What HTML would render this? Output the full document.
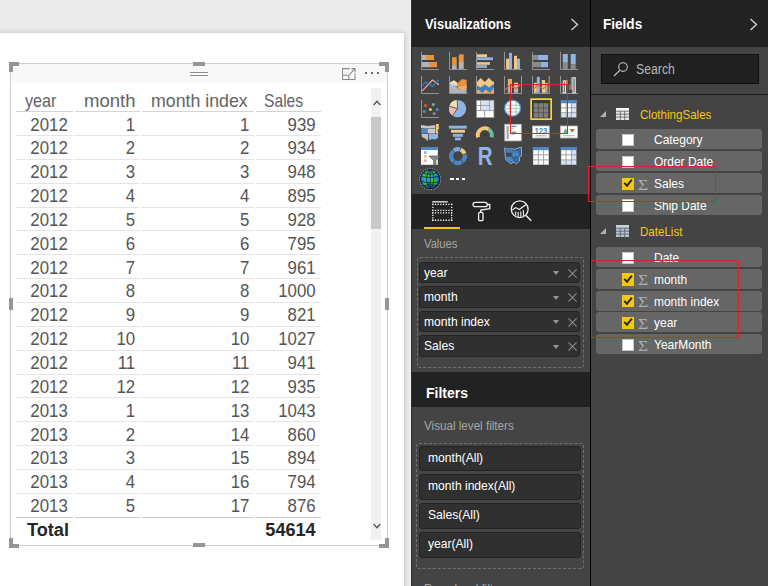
<!DOCTYPE html>
<html lang="en"><head><meta charset="utf-8"><title>Power BI</title>
<style>
html,body{margin:0;padding:0}
body{width:768px;height:586px;overflow:hidden;position:relative;background:#eaeaea;font-family:"Liberation Sans",sans-serif;}
div,span,svg,i,b,u,em{position:absolute;box-sizing:border-box}
#topbar{left:0;top:0;width:411px;height:33px;background:#eaeaea}
#canvas{left:-10px;top:33px;width:414px;height:563px;background:#fff;box-shadow:0 0 5px rgba(0,0,0,.2)}
#gutter{left:410px;top:0;width:1px;height:586px;background:#f2f2f2}
#visual{left:10px;top:63px;width:377.5px;height:483px;border:1px solid #cecece;background:#fff}
#vhead{left:0;top:0;width:376px;height:19px;background:#f8f8f8}
.grip{left:179px;width:18px;height:1px;background:#8c8c8c}
#focus{left:329.6px;top:2.6px}
#more{left:354px;top:8px;width:16px;height:3px}
#more i{position:absolute;top:0;width:2.4px;height:2.4px;background:#707070}
#more i:nth-child(1){left:0}#more i:nth-child(2){left:6px}#more i:nth-child(3){left:12px}
.hd{width:10px;height:10px;border:0 solid #959595}
.hd.h1{left:9px;top:62px;border-top-width:4px;border-left-width:4px}
.hd.h2{left:378.6px;top:62px;border-top-width:4px;border-right-width:4px}
.hd.h3{left:9px;top:538px;border-bottom-width:4px;border-left-width:4px}
.hd.h4{left:378.6px;top:538px;border-bottom-width:4px;border-right-width:4px}
.hm{background:#959595}
#tbl{left:0;top:0;width:330px;height:546px;color:#555}
.th{top:90px;height:22px;line-height:22px;font-size:18.2px;white-space:nowrap;color:#646464;transform-origin:0 0}
.hl{top:111px;height:1px;background:#d4d4d4}
.tr{left:16px;width:305px;height:24px;border-bottom:1px solid #e4e4e4;font-size:18.2px}
.tr span{top:1.5px;height:22px;line-height:22px;text-align:right;white-space:nowrap;transform:scaleX(.925);transform-origin:100% 0}
.c1{left:0;width:51.8px}.c2{left:58px;width:61.2px}.c3{left:125px;width:108.4px}.c4{left:239px;width:60.7px}
.tot{border-bottom:0;border-top:0;font-weight:bold;font-size:17.5px;color:#252525}
.tot span{top:2px;transform:scaleX(1.035)}
.tot .t1{left:10.5px;text-align:left;transform-origin:0 0}
#sb{left:371px;top:88px;width:10px;height:452.3px;background:#f1f1f1}
#sbt{left:.3px;top:29.3px;width:9.3px;height:111.4px;background:#c9c9c9}
.au{left:1.6px;top:12px}.ad{left:1.6px;top:435px}
#viz{left:411px;top:0;width:180px;height:586px;background:#444;border-left:1px solid #2b2b2b}
#fields{left:591px;top:0;width:177px;height:586px;background:#444}
#pdiv{left:590px;top:0;width:1px;height:586px;background:#000}
.ph{left:0;width:100%;background:#222}
.pt{color:#fff;font-weight:bold;font-size:14.5px;line-height:20px;white-space:nowrap;transform:scaleX(.89);transform-origin:0 0}
.sec{color:#a6a6a6;font-size:12.3px;line-height:16px;white-space:nowrap;transform:scaleX(.93);transform-origin:0 0}
#tabsel{left:12px;top:227px;width:36px;height:2px;background:#f2c811}
.dash{border:1px dashed #707070;border-radius:3px}
.vi{left:7.3px;width:161.2px;height:21.8px;background:#303030;border:1px solid #242424;border-radius:3px}
.vi span{left:4px;top:2px;transform:scaleX(.93);transform-origin:0 0;color:#fff;font-size:13px;line-height:16px;white-space:nowrap}
.vi b{left:133px;top:8.5px;width:0;height:0;border:3.8px solid transparent;border-top:4px solid #969696;border-bottom:0}
.vi u{left:148px;top:6px;width:9px;height:9px}
.vi u svg{left:0;top:0}
.fi{left:7.2px;width:161.8px;height:25.8px;background:#303030;border:1px solid #242424;border-radius:3px}
.fi span{left:8.3px;top:3px;transform:scaleX(.96);transform-origin:0 0;color:#fff;font-size:12.6px;line-height:16px;white-space:nowrap}
#search{left:10px;top:54px;width:158px;height:30px;background:#212121;border:1px solid #0e0e0e}
#search span{left:34.4px;top:6px;transform:scaleX(.875);transform-origin:0 0;color:#b4b4b4;font-size:14px;line-height:16px}
#fline{left:0;top:94px;width:177px;height:1px;background:#1c1c1c}
.grp{left:0;width:177px;height:18px}
.grp .tri{position:absolute;left:9.2px;top:5.6px;width:0;height:0;border-left:6.6px solid transparent;border-bottom:6.6px solid #b0b0b0}
.grp .tbi{left:25px;top:3px}
.grp span{left:49.2px;top:1.7px;transform:scaleX(.89);transform-origin:0 0;color:#f2c811;font-size:13px;line-height:16px;white-space:nowrap}
.fr{left:4.8px;width:166.2px;height:20px;background:#666;border-radius:3px}
.fr .cb{position:absolute;left:26.2px;top:4.5px;width:12.2px;height:12.2px;background:#fff;border:1.6px solid #c6c6c6}
.fr .cb.on{background:#f2c811;border-color:#f2c811}
.fr .cb svg{left:-1.1px;top:-1.6px}
.fr em{position:absolute;left:42.3px;top:4.6px;transform:scaleX(1.25);transform-origin:0 0;font-style:normal;color:#b0b0b0;font-size:14px;line-height:16px;font-family:"Liberation Serif",serif}
.fr span{left:58.2px;top:3px;transform:scaleX(.935);transform-origin:0 0;color:#fff;font-size:12.8px;line-height:16px;white-space:nowrap}
.red{border:1px solid #e0202a}
#ico{left:0;top:0;width:768px;height:586px}
#ico svg{overflow:visible}
.dots{width:16px;height:3px}
.dots i{top:0;width:3.5px;height:2.6px;background:#f4f4f4}
.dots i:nth-child(1){left:0}.dots i:nth-child(2){left:5.8px}.dots i:nth-child(3){left:11.7px}
.gap{top:111px;width:1.5px;height:409px;background:#fff}
.tr.last{border-bottom:1.6px solid #cbcbcb}

</style></head>
<body>
<div id="topbar"></div>
<div id="canvas"></div>
<div id="gutter"></div>
<div id="visual">
<div id="vhead"></div>
<div class="grip" style="top:8px"></div><div class="grip" style="top:11px"></div>
<svg id="focus" width="15.6" height="14.2" viewBox="0 0 15 13" preserveAspectRatio="none"><path d="M8.5 1.5H1.5V11.5H13.5V6" fill="none" stroke="#8a8a8a" stroke-width="1"/><path d="M1.5 7.5H7.5V11.5" fill="none" stroke="#8a8a8a" stroke-width="1"/><path d="M8 7L13.5 1.5M10 1.5H13.5V5" fill="none" stroke="#8a8a8a" stroke-width="1"/></svg>
<div id="more"><i></i><i></i><i></i></div>
</div>
<div class="hd h1"></div><div class="hd h2"></div><div class="hd h3"></div><div class="hd h4"></div>
<div class="hm" style="left:193px;top:62px;width:12px;height:4px"></div>
<div class="hm" style="left:193px;top:543px;width:12px;height:4px"></div>
<div class="hm" style="left:9px;top:298px;width:4px;height:12px"></div>
<div class="hm" style="left:385px;top:298px;width:4px;height:12px"></div>
<div id="tbl">
<div class="th" style="left:25.2px;transform:scaleX(.89)">year</div><div class="th" style="left:83.6px;transform:scaleX(1.02)">month</div><div class="th" style="left:151.1px;transform:scaleX(.975)">month index</div><div class="th" style="left:264.4px;transform:scaleX(.86)">Sales</div>
<div class="hl" style="left:16px;width:57px"></div><div class="hl" style="left:74px;width:66px"></div><div class="hl" style="left:141.5px;width:112.5px"></div><div class="hl" style="left:255px;width:66px"></div>
<div class="tr" style="top:112.00px"><span class="c1">2012</span><span class="c2">1</span><span class="c3">1</span><span class="c4">939</span></div>
<div class="tr" style="top:135.85px"><span class="c1">2012</span><span class="c2">2</span><span class="c3">2</span><span class="c4">934</span></div>
<div class="tr" style="top:159.70px"><span class="c1">2012</span><span class="c2">3</span><span class="c3">3</span><span class="c4">948</span></div>
<div class="tr" style="top:183.55px"><span class="c1">2012</span><span class="c2">4</span><span class="c3">4</span><span class="c4">895</span></div>
<div class="tr" style="top:207.40px"><span class="c1">2012</span><span class="c2">5</span><span class="c3">5</span><span class="c4">928</span></div>
<div class="tr" style="top:231.25px"><span class="c1">2012</span><span class="c2">6</span><span class="c3">6</span><span class="c4">795</span></div>
<div class="tr" style="top:255.10px"><span class="c1">2012</span><span class="c2">7</span><span class="c3">7</span><span class="c4">961</span></div>
<div class="tr" style="top:278.95px"><span class="c1">2012</span><span class="c2">8</span><span class="c3">8</span><span class="c4">1000</span></div>
<div class="tr" style="top:302.80px"><span class="c1">2012</span><span class="c2">9</span><span class="c3">9</span><span class="c4">821</span></div>
<div class="tr" style="top:326.65px"><span class="c1">2012</span><span class="c2">10</span><span class="c3">10</span><span class="c4">1027</span></div>
<div class="tr" style="top:350.50px"><span class="c1">2012</span><span class="c2">11</span><span class="c3">11</span><span class="c4">941</span></div>
<div class="tr" style="top:374.35px"><span class="c1">2012</span><span class="c2">12</span><span class="c3">12</span><span class="c4">935</span></div>
<div class="tr" style="top:398.20px"><span class="c1">2013</span><span class="c2">1</span><span class="c3">13</span><span class="c4">1043</span></div>
<div class="tr" style="top:422.05px"><span class="c1">2013</span><span class="c2">2</span><span class="c3">14</span><span class="c4">860</span></div>
<div class="tr" style="top:445.90px"><span class="c1">2013</span><span class="c2">3</span><span class="c3">15</span><span class="c4">894</span></div>
<div class="tr" style="top:469.75px"><span class="c1">2013</span><span class="c2">4</span><span class="c3">16</span><span class="c4">794</span></div>
<div class="tr last" style="top:493.60px"><span class="c1">2013</span><span class="c2">5</span><span class="c3">17</span><span class="c4">876</span></div>
<div class="tr tot" style="top:517.45px"><span class="t1">Total</span><span class="c4">54614</span></div>
<div class="gap" style="left:73px"></div><div class="gap" style="left:140px"></div><div class="gap" style="left:254px"></div></div>
<div id="sb"><div id="sbt"></div><svg class="au" width="8" height="6" viewBox="0 0 8 6"><path d="M0.7 5L4 1.2L7.3 5" fill="none" stroke="#555" stroke-width="1.3"/></svg><svg class="ad" width="8" height="6" viewBox="0 0 8 6"><path d="M0.7 1L4 4.8L7.3 1" fill="none" stroke="#555" stroke-width="1.3"/></svg></div>
<div id="viz">
<div class="ph" style="top:0;height:47px"></div>
<div class="pt" style="left:12.8px;top:14px">Visualizations</div>
<svg class="chev" style="left:158px;top:18px" width="9" height="13" viewBox="0 0 9 13"><path d="M1.5 1L7.5 6.5L1.5 12" fill="none" stroke="#d0d0d0" stroke-width="1.4"/></svg>
<div class="ph" style="top:194px;height:35px"></div>
<div id="tabsel"></div>
<div class="sec" style="left:11.8px;top:236px;transform:scaleX(.91)">Values</div>
<div class="dash" style="left:4.8px;top:257.2px;width:167.4px;height:110.6px"></div>
<div class="vi" style="top:261.5px"><span>year</span><b></b><u><svg width="9" height="9" viewBox="0 0 9 9"><path d="M0.4 0.4L8.6 8.6M8.6 0.4L0.4 8.6" stroke="#8c8c8c" stroke-width="1.05" fill="none"/></svg></u></div>
<div class="vi" style="top:286.1px"><span>month</span><b></b><u><svg width="9" height="9" viewBox="0 0 9 9"><path d="M0.4 0.4L8.6 8.6M8.6 0.4L0.4 8.6" stroke="#8c8c8c" stroke-width="1.05" fill="none"/></svg></u></div>
<div class="vi" style="top:310.7px"><span>month index</span><b></b><u><svg width="9" height="9" viewBox="0 0 9 9"><path d="M0.4 0.4L8.6 8.6M8.6 0.4L0.4 8.6" stroke="#8c8c8c" stroke-width="1.05" fill="none"/></svg></u></div>
<div class="vi" style="top:335.2px"><span>Sales</span><b></b><u><svg width="9" height="9" viewBox="0 0 9 9"><path d="M0.4 0.4L8.6 8.6M8.6 0.4L0.4 8.6" stroke="#8c8c8c" stroke-width="1.05" fill="none"/></svg></u></div>
<div class="ph" style="top:372px;height:35px"></div>
<div class="pt" style="left:13.6px;top:382.5px;transform:scaleX(.965)">Filters</div>
<div class="sec" style="left:12px;top:418px;transform:scaleX(.947)">Visual level filters</div>
<div class="dash" style="left:3.9px;top:443px;width:168.2px;height:126px"></div>
<div class="fi" style="top:445.6px"><span>month(All)</span></div>
<div class="fi" style="top:474.4px"><span>month index(All)</span></div>
<div class="fi" style="top:503.1px"><span>Sales(All)</span></div>
<div class="fi" style="top:531.9px"><span>year(All)</span></div>
<div class="sec" style="left:12px;top:580.5px;transform:scaleX(.947)">Page level filters</div>
</div>
<div id="fields">
<div class="ph" style="top:0;height:47px"></div>
<div class="pt" style="left:12.2px;top:14px;transform:scaleX(.935)">Fields</div>
<svg class="chev" style="left:158px;top:18px" width="9" height="13" viewBox="0 0 9 13"><path d="M1.5 1L7.5 6.5L1.5 12" fill="none" stroke="#d0d0d0" stroke-width="1.4"/></svg>
<div id="search"><svg width="16" height="16" viewBox="0 0 16 16" style="left:11px;top:6px"><circle cx="10" cy="6" r="4.3" fill="none" stroke="#b8b8b8" stroke-width="1.15"/><path d="M6.8 9.2L1 15" stroke="#b8b8b8" stroke-width="1.25"/></svg><span>Search</span></div>
<div id="fline"></div>
<div class="grp" style="top:105px"><i class="tri"></i><svg class="tbi" width="13" height="12" viewBox="0 0 13 12"><rect x="0" y="0" width="13" height="12" fill="#e6e6e6"/><rect x="0" y="0" width="13" height="2.8" fill="#f6f6f6"/><path d="M0 3.2H13M0 6.2H13M0 9.1H13M4.3 3.2V12M8.7 3.2V12" stroke="#5a5a5a" stroke-width=".8"/></svg><span>ClothingSales</span></div>
<div class="fr" style="top:129.2px"><i class="cb"></i><span>Category</span></div>
<div class="fr" style="top:151.1px"><i class="cb"></i><span>Order Date</span></div>
<div class="fr" style="top:173px"><i class="cb on"><svg width="12" height="12" viewBox="0 0 12 12"><path d="M2.2 5.8L5 8.7L9.9 2.7" fill="none" stroke="#262626" stroke-width="1.9"/></svg></i><em>Σ</em><span>Sales</span></div>
<div class="fr" style="top:194.9px"><i class="cb"></i><span>Ship Date</span></div>
<div class="grp" style="top:222.2px"><i class="tri"></i><svg class="tbi" width="13" height="12" viewBox="0 0 13 12"><rect x="0" y="0" width="13" height="12" fill="#b4c2d6"/><rect x="0" y="0" width="13" height="2.8" fill="#c6d2e2"/><path d="M0 3.2H13M0 6.2H13M0 9.1H13M4.3 3.2V12M8.7 3.2V12" stroke="#5a5a5a" stroke-width=".8"/></svg><span>DateList</span></div>
<div class="fr" style="top:247px"><i class="cb"></i><span>Date</span></div>
<div class="fr" style="top:268.9px"><i class="cb on"><svg width="12" height="12" viewBox="0 0 12 12"><path d="M2.2 5.8L5 8.7L9.9 2.7" fill="none" stroke="#262626" stroke-width="1.9"/></svg></i><em>Σ</em><span>month</span></div>
<div class="fr" style="top:290.6px"><i class="cb on"><svg width="12" height="12" viewBox="0 0 12 12"><path d="M2.2 5.8L5 8.7L9.9 2.7" fill="none" stroke="#262626" stroke-width="1.9"/></svg></i><em>Σ</em><span>month index</span></div>
<div class="fr" style="top:312.3px"><i class="cb on"><svg width="12" height="12" viewBox="0 0 12 12"><path d="M2.2 5.8L5 8.7L9.9 2.7" fill="none" stroke="#262626" stroke-width="1.9"/></svg></i><em>Σ</em><span>year</span></div>
<div class="fr" style="top:334.1px"><i class="cb"></i><em>Σ</em><span>YearMonth</span></div>
</div>
<div id="pdiv"></div>
<div id="ico">
<svg style="left:421.1px;top:51.9px" width="18" height="18" viewBox="0 0 18 18"><path d="M0.5 0V17.5H18" fill="none" stroke="#929292" stroke-width="1"/><rect x="1" y="3" width="4" height="5" fill="#b4b4b4"/><rect x="5" y="3" width="8" height="5" fill="#e8923c"/><rect x="1" y="10" width="7" height="5.2" fill="#b4b4b4"/><rect x="8" y="10" width="8" height="5.2" fill="#e8923c"/></svg>
<svg style="left:448.8px;top:51.9px" width="18" height="18" viewBox="0 0 18 18"><path d="M0.5 0V17.5H18" fill="none" stroke="#929292" stroke-width="1"/><rect x="3" y="5.2" width="4.7" height="8" fill="#e8923c"/><rect x="3" y="13.2" width="4.7" height="3.8" fill="#b4b4b4"/><rect x="9.8" y="2.3" width="4.9" height="7.7" fill="#e8923c"/><rect x="9.8" y="10" width="4.9" height="7" fill="#b4b4b4"/></svg>
<svg style="left:476.3px;top:51.9px" width="18" height="18" viewBox="0 0 18 18"><path d="M0.5 0V17.5H18" fill="none" stroke="#929292" stroke-width="1"/><rect x="1" y="2.3" width="10" height="2.7" fill="#f0c987"/><rect x="1" y="5.3" width="16" height="2.8" fill="#8fb4e3"/><rect x="1" y="10.2" width="13" height="2.6" fill="#f0c987"/><rect x="1" y="13.2" width="10" height="2.7" fill="#8fb4e3"/></svg>
<svg style="left:504px;top:51.9px" width="18" height="18" viewBox="0 0 18 18"><path d="M0.5 0V17.5H18" fill="none" stroke="#929292" stroke-width="1"/><rect x="2.1" y="6.7" width="2.9" height="10.3" fill="#f0c987"/><rect x="5" y="0.9" width="3" height="16.1" fill="#8fb4e3"/><rect x="10" y="3.8" width="3" height="13.2" fill="#f0c987"/><rect x="13" y="6.7" width="3" height="10.3" fill="#8fb4e3"/></svg>
<svg style="left:531.8px;top:51.9px" width="18" height="18" viewBox="0 0 18 18"><path d="M0.5 0V17.5H18" fill="none" stroke="#929292" stroke-width="1"/><rect x="1" y="3" width="4.8" height="5" fill="#8a8a8a"/><rect x="5.8" y="3" width="10.2" height="5" fill="#8fb4e3"/><rect x="1" y="10" width="7.7" height="5.2" fill="#8a8a8a"/><rect x="8.7" y="10" width="7.3" height="5.2" fill="#8fb4e3"/></svg>
<svg style="left:559.5px;top:51.9px" width="18" height="18" viewBox="0 0 18 18"><path d="M0.5 0V17.5H18" fill="none" stroke="#929292" stroke-width="1"/><rect x="2.8" y="2" width="5" height="8" fill="#8fb4e3"/><rect x="2.8" y="10" width="5" height="7" fill="#8a8a8a"/><rect x="10.7" y="2" width="5" height="10.3" fill="#8fb4e3"/><rect x="10.7" y="12.3" width="5" height="4.7" fill="#8a8a8a"/></svg>
<svg style="left:421.1px;top:75.9px" width="18" height="18" viewBox="0 0 18 18"><path d="M0.5 0V17.5H18" fill="none" stroke="#929292" stroke-width="1"/><path d="M1.2 14.9L11.5 4L17.9 8.7" fill="none" stroke="#f0b8a0" stroke-width="1.1"/><path d="M1.2 9.6L4.7 6.1L11.5 10.5L17.9 4" fill="none" stroke="#3f7fc4" stroke-width="1.2"/></svg>
<svg style="left:448.8px;top:75.9px" width="18" height="18" viewBox="0 0 18 18"><path d="M0.5 0V17.5H18" fill="none" stroke="#929292" stroke-width="1"/><path d="M1 17V11L7 10.5L11 13.5L17.6 12V17Z" fill="#b4b4b4"/><path d="M1 8.6V6.5L4.5 4.2L7 5.5L9.4 8L8 10.4L4 9Z" fill="#f5deb0"/><path d="M1 8.5H6L7.2 10.6L1 11.3Z" fill="#a8c8e8"/><path d="M7.6 8L13 3L17.6 4V12.2L11 13.7L8.5 10.5Z" fill="#e8923c"/><path d="M8.5 10.5L11 13.7L17.6 12.2V9L12 11Z" fill="#f0b070"/></svg>
<svg style="left:476.3px;top:75.9px" width="18" height="18" viewBox="0 0 18 18"><path d="M0.5 0V17.5" stroke="#929292" stroke-width="1"/><path d="M1 17.5V6L4.7 2L8.9 6L12.9 1.7L17 6L18 5V17.5Z" fill="#f0c987"/><path d="M1 17.5V9.5L4.7 11.4L8.9 8.3L12.9 11.4L17 8.3L18 9V17.5Z" fill="#3f7fc4"/><path d="M1 17.5V14.5L2.5 13.6L6.2 17L9.7 13.6L13.8 17L18 11.8V17.5Z" fill="#f0a860"/></svg>
<svg style="left:504px;top:75.9px" width="18" height="18" viewBox="0 0 18 18"><path d="M0.5 0V17.5H18" fill="none" stroke="#929292" stroke-width="1"/><rect x="3.8" y="2.9" width="4.2" height="6.1" fill="#f0a860"/><rect x="3.8" y="9" width="4.2" height="7.8" fill="#b4b4b4"/><rect x="10" y="6.7" width="4.1" height="4.7" fill="#f0c987"/><rect x="10" y="11.4" width="4.1" height="5.4" fill="#b4b4b4"/><rect x="17" y="0" width="1" height="17" fill="#d8883c"/><path d="M1 13.8L5.9 9.7L11.8 12.6L16.4 8.5" fill="none" stroke="#e07030" stroke-width="1.1"/></svg>
<svg style="left:531.8px;top:75.9px" width="18" height="18" viewBox="0 0 18 18"><path d="M0.5 0V17.5H18" fill="none" stroke="#929292" stroke-width="1"/><rect x="1.9" y="6.7" width="2.9" height="10.1" fill="#f0c987"/><rect x="4.8" y="0.9" width="3" height="15.9" fill="#8fb4e3"/><rect x="9.8" y="4" width="3.2" height="12.8" fill="#f0c987"/><rect x="13" y="6.7" width="2.6" height="10.1" fill="#8fb4e3"/><rect x="16.6" y="0" width="1.2" height="17" fill="#d8883c"/><path d="M0.7 13.8L5.4 9.7L11.3 12.6L15.6 9" fill="none" stroke="#e07030" stroke-width="1.1"/></svg>
<svg style="left:559.5px;top:75.9px" width="18" height="18" viewBox="0 0 18 18"><path d="M0.5 0V17.5H18" fill="none" stroke="#929292" stroke-width="1"/><rect x="3.2" y="4.8" width="2.4" height="12" fill="#777" stroke="#e8e8e8" stroke-width="1"/><rect x="5.9" y="4.2" width="2" height="4.3" fill="#e07030"/><rect x="8.8" y="8.7" width="1.9" height="5.1" fill="#e05030"/><rect x="10.7" y="1.2" width="1.7" height="12.6" fill="#5fb090"/><rect x="12.9" y="1.7" width="2.4" height="15.1" fill="#777" stroke="#e8e8e8" stroke-width="1"/></svg>
<svg style="left:421.1px;top:99.8px" width="18" height="18" viewBox="0 0 18 18"><path d="M0.5 0V17.5H18" fill="none" stroke="#929292" stroke-width="1"/><circle cx="4.5" cy="5.6" r="1.5" fill="#e05a30"/><circle cx="12.3" cy="4.5" r="1.5" fill="#6fb89a"/><circle cx="9.4" cy="9.6" r="1.5" fill="#f0c060"/><circle cx="3.3" cy="11.4" r="1.5" fill="#4a8ad0"/><circle cx="16.2" cy="9.6" r="1.5" fill="#4a8ad0"/><circle cx="13.2" cy="13.5" r="1.5" fill="#8a8a8a"/></svg>
<svg style="left:448.8px;top:99.8px" width="18" height="18" viewBox="0 0 18 18"><circle cx="8.6" cy="8.6" r="8.6" fill="#8fb4e3"/><path d="M8.6 8.6L8.2 0A8.6 8.6 0 0 0 0.4 6.2Z" fill="#f5deb0"/><path d="M8.6 8.6L0.4 6.2A8.6 8.6 0 0 0 3.6 15.6Z" fill="#f0b8a8"/><path d="M8.2 0L8.6 8.6L0.4 6.2M8.6 8.6L3.6 15.6" fill="none" stroke="#444" stroke-width="0.8"/></svg>
<svg style="left:476.3px;top:99.8px" width="18" height="18" viewBox="0 0 18 18"><rect x="0.6" y="0.3" width="17.3" height="17.3" fill="#fff" stroke="#9a9a9a" stroke-width="0.8"/><rect x="5" y="1.2" width="8.1" height="3.8" fill="#d3e2f5"/><rect x="5" y="6" width="8.1" height="4" fill="#d3e2f5"/><rect x="13.9" y="1.2" width="3.3" height="8.8" fill="#d3e2f5"/><path d="M0.6 10.6H17.9M4.5 0.3V10.6M0.6 5.5H13.5M13.5 0.3V10.6M8.7 10.6V17.6" fill="none" stroke="#8a8a8a" stroke-width="0.8"/></svg>
<svg style="left:504px;top:99.8px" width="18" height="18" viewBox="0 0 18 18"><circle cx="8.6" cy="8.2" r="8" fill="#fff" stroke="#4a86c8" stroke-width="1.2"/><path d="M5.3 1V15.4M11.9 1V15.4M1.2 5.2H16M0.8 8.7H16.4M1.5 12H15.7" fill="none" stroke="#8fccae" stroke-width="0.9"/></svg>
<svg style="left:531.8px;top:99.8px" width="18" height="18" viewBox="0 0 18 18"><rect x="-0.85" y="-0.85" width="20" height="20" fill="#3a3a3a" stroke="#f7d53c" stroke-width="1.7"/><rect x="1.7" y="3.2" width="4.7" height="4.6" fill="#7e7e7e"/><rect x="1.7" y="8.3" width="4.7" height="4.3" fill="#7e7e7e"/><rect x="1.7" y="13.1" width="4.7" height="4.5" fill="#7e7e7e"/><rect x="6.8" y="3.2" width="4.3" height="4.6" fill="#7e7e7e"/><rect x="6.8" y="8.3" width="4.3" height="4.3" fill="#7e7e7e"/><rect x="6.8" y="13.1" width="4.3" height="4.5" fill="#7e7e7e"/><rect x="11.6" y="3.2" width="4.7" height="4.6" fill="#7e7e7e"/><rect x="11.6" y="8.3" width="4.7" height="4.3" fill="#7e7e7e"/><rect x="11.6" y="13.1" width="4.7" height="4.5" fill="#7e7e7e"/></svg>
<svg style="left:559.5px;top:99.8px" width="18" height="18" viewBox="0 0 18 18"><rect x="0.8" y="0.1" width="15.8" height="17.5" fill="#9a9a9a"/><rect x="0.8" y="0.1" width="15.8" height="2.8" fill="#4a86c8"/><rect x="1.3" y="3.4" width="4.33" height="3.97" fill="#fff"/><rect x="6.53333" y="3.4" width="4.33" height="3.97" fill="#fff"/><rect x="11.7667" y="3.4" width="4.33" height="3.97" fill="#d3e2f5"/><rect x="1.3" y="8.26667" width="4.33" height="3.97" fill="#fff"/><rect x="6.53333" y="8.26667" width="4.33" height="3.97" fill="#fff"/><rect x="11.7667" y="8.26667" width="4.33" height="3.97" fill="#d3e2f5"/><rect x="1.3" y="13.1333" width="4.33" height="3.97" fill="#d3e2f5"/><rect x="6.53333" y="13.1333" width="4.33" height="3.97" fill="#d3e2f5"/><rect x="11.7667" y="13.1333" width="4.33" height="3.97" fill="#d3e2f5"/></svg>
<svg style="left:421.1px;top:123.8px" width="18" height="18" viewBox="0 0 18 18"><path d="M0 1L7 2L14 1V4.5H3L0 4Z" fill="#c8c8c8"/><path d="M0.5 4.5L6 5V9.5H0Z" fill="#4a86c8"/><path d="M6.5 5H14V9.5H6.5Z" fill="#c8c8c8"/><path d="M15 0H17.8V5L16.5 6L17.5 9.5H14.6V5.5Z" fill="#f0c878"/><path d="M0.5 10H7L7.5 13L6.5 17L4 14.5L1 13Z" fill="#c0c0c0"/><path d="M8 10H17V14L14 15.5L11 15L8.2 16.2Z" fill="#8fb4e3"/></svg>
<svg style="left:448.8px;top:123.8px" width="18" height="18" viewBox="0 0 18 18"><rect x="-0.1" y="1.7" width="17.9" height="2.9" fill="#8fb4e3"/><rect x="1.9" y="5.8" width="14.1" height="2.9" fill="#f0c987"/><rect x="3.9" y="9.9" width="10" height="2.9" fill="#8fb4e3"/><rect x="6" y="13.6" width="5.9" height="2.7" fill="#8fb4e3"/></svg>
<svg style="left:476.3px;top:123.8px" width="18" height="18" viewBox="0 0 18 18"><path d="M2.19 13.41A7 7 0 0 1 12.46 5.25" fill="none" stroke="#f0c878" stroke-width="3.9"/><path d="M12.46 5.25A7 7 0 0 1 15.51 13.41" fill="none" stroke="#6fb89a" stroke-width="3.9"/><path d="M7.4 12.4L10.9 9.3" stroke="#303030" stroke-width="1.3"/></svg>
<svg style="left:504px;top:123.8px" width="18" height="18" viewBox="0 0 18 18"><rect x="0.8" y="0.3" width="16.4" height="16.6" fill="#fff" stroke="#bdbdbd" stroke-width="0.8"/><rect x="2.5" y="1.8" width="2.3" height="13.4" fill="#a8a8a8"/><rect x="7.5" y="1.8" width="4.9" height="1.2" fill="#4a86c8"/><rect x="7.5" y="7.6" width="4.9" height="1.2" fill="#4a86c8"/><rect x="7.5" y="4.3" width="2.5" height="0.7" fill="#bbb"/><rect x="7.5" y="10.2" width="2.5" height="0.8" fill="#bbb"/></svg>
<svg style="left:531.8px;top:123.8px" width="18" height="18" viewBox="0 0 18 18"><rect x="0.6" y="2" width="16.6" height="12" fill="#fff" stroke="#bdbdbd" stroke-width="0.8"/><text x="8.9" y="9.6" font-family="Liberation Sans, sans-serif" font-weight="bold" font-size="8.6" fill="#4a86c8" text-anchor="middle" textLength="13" lengthAdjust="spacingAndGlyphs">123</text><rect x="3.4" y="11.4" width="11" height="0.9" fill="#9a9a9a"/></svg>
<svg style="left:559.5px;top:123.8px" width="18" height="18" viewBox="0 0 18 18"><rect x="0.4" y="2" width="17" height="12" fill="#fff" stroke="#bdbdbd" stroke-width="0.8"/><path d="M3.2 8.7L5.6 4.6L8 8.7Z" fill="#4fa886"/><path d="M9.6 4.9H14.8L12.2 8.8Z" fill="#e05a30"/><rect x="3" y="11.4" width="11.6" height="0.8" fill="#9a9a9a"/></svg>
<svg style="left:421.1px;top:147px" width="18" height="18" viewBox="0 0 18 18"><rect x="0" y="0" width="16.8" height="17.8" fill="#fff"/><rect x="0" y="0" width="16.8" height="3" fill="#4a86c8"/><rect x="3" y="4.1" width="2.6" height="2.7" fill="#8fb4e3"/><rect x="3" y="8.2" width="2.6" height="2.6" fill="#f0c070"/><rect x="3" y="12.3" width="2.6" height="2.6" fill="#f0a898"/><path d="M8 9H19.2L14.9 13.6V18.8L12.6 17.4V13.6Z" fill="#8a8a8a" stroke="#444" stroke-width="0.6"/></svg>
<svg style="left:448.8px;top:147px" width="18" height="18" viewBox="0 0 18 18"><path d="M15.70 7.43A6.9 6.9 0 0 1 13.44 14.39" fill="none" stroke="#4a86c8" stroke-width="4.1"/><path d="M12.86 14.82A6.9 6.9 0 0 1 5.34 14.95" fill="none" stroke="#4a86c8" stroke-width="4.1"/><path d="M4.75 14.54A6.9 6.9 0 0 1 4.21 4.14" fill="none" stroke="#4a86c8" stroke-width="4.1"/><path d="M4.75 3.66A6.9 6.9 0 0 1 10.90 2.47" fill="none" stroke="#7aa8dc" stroke-width="4.1"/><path d="M11.58 2.70A6.9 6.9 0 0 1 15.48 6.74" fill="none" stroke="#f0c878" stroke-width="4.1"/></svg>
<svg style="left:476.3px;top:147px" width="18" height="18" viewBox="0 0 18 18"><text x="1.7" y="18" font-family="Liberation Sans, sans-serif" font-weight="bold" font-size="25.4" fill="#8fb4e3" textLength="14.8" lengthAdjust="spacingAndGlyphs">R</text></svg>
<svg style="left:504px;top:147px" width="18" height="18" viewBox="0 0 18 18"><path d="M0.5 1L5 2L8 1.2L10 2.5L13 1.5L15 0.5H17.5V9L15.5 10V14L12.5 16.8L9 15L7 17L4 14.5L2 13L1.2 8.5Z" fill="#3a5f8a" stroke="#8fb4e3" stroke-width="0.9"/><path d="M1 1.2L8 1.5L8.5 4H14.5V5.5H2Z" fill="#4f79a8"/><path d="M2 6H7.5V9.5H2Z" fill="#34495e"/><path d="M8.5 5.5H14.8V9.2H10V10H8.5Z" fill="#4a86c8"/><path d="M1.5 10H7.5V12H9V15H6L3.5 13Z" fill="#4a86c8"/><path d="M10 10.3H15V14L12.5 16.2L10 15Z" fill="#3e6796"/></svg>
<svg style="left:531.8px;top:147px" width="18" height="18" viewBox="0 0 18 18"><rect x="0.9" y="0" width="16.1" height="18" fill="#9a9a9a"/><rect x="0.9" y="0" width="16.1" height="2.8" fill="#4a86c8"/><rect x="1.4" y="3.3" width="4.43" height="4.13" fill="#fff"/><rect x="6.73333" y="3.3" width="4.43" height="4.13" fill="#fff"/><rect x="12.0667" y="3.3" width="4.43" height="4.13" fill="#fff"/><rect x="1.4" y="8.33333" width="4.43" height="4.13" fill="#fff"/><rect x="6.73333" y="8.33333" width="4.43" height="4.13" fill="#fff"/><rect x="12.0667" y="8.33333" width="4.43" height="4.13" fill="#fff"/><rect x="1.4" y="13.3667" width="4.43" height="4.13" fill="#fff"/><rect x="6.73333" y="13.3667" width="4.43" height="4.13" fill="#fff"/><rect x="12.0667" y="13.3667" width="4.43" height="4.13" fill="#fff"/></svg>
<svg style="left:559.5px;top:147px" width="18" height="18" viewBox="0 0 18 18"><rect x="0.8" y="0" width="15.8" height="18" fill="#9a9a9a"/><rect x="0.8" y="0" width="15.8" height="2.8" fill="#4a86c8"/><rect x="1.3" y="3.3" width="4.33" height="4.13" fill="#fff"/><rect x="6.53333" y="3.3" width="4.33" height="4.13" fill="#fff"/><rect x="11.7667" y="3.3" width="4.33" height="4.13" fill="#d3e2f5"/><rect x="1.3" y="8.33333" width="4.33" height="4.13" fill="#fff"/><rect x="6.53333" y="8.33333" width="4.33" height="4.13" fill="#fff"/><rect x="11.7667" y="8.33333" width="4.33" height="4.13" fill="#d3e2f5"/><rect x="1.3" y="13.3667" width="4.33" height="4.13" fill="#d3e2f5"/><rect x="6.53333" y="13.3667" width="4.33" height="4.13" fill="#d3e2f5"/><rect x="11.7667" y="13.3667" width="4.33" height="4.13" fill="#d3e2f5"/></svg>
<svg style="left:419px;top:168px;overflow:visible" width="22" height="22" viewBox="0 0 22 22"><defs><radialGradient id="gg" cx="0.42" cy="0.38" r="0.65"><stop offset="0" stop-color="#4db8ff"/><stop offset="0.6" stop-color="#1b86e0"/><stop offset="1" stop-color="#0c4fa0"/></radialGradient></defs><circle cx="11.2" cy="11.2" r="10.4" fill="none" stroke="#d8d8d8" stroke-width="0.9" stroke-dasharray="1 1.4"/><circle cx="11.2" cy="11.2" r="9.6" fill="url(#gg)" stroke="#151515" stroke-width="1"/><path d="M4.2 6L8.5 3.6L11.5 6.5L9.5 9.5L6 10.8L3.4 9Z M13 3L16.8 5L15.8 8L13.2 7Z M11.5 11L15.5 10L18.6 12.2L16.5 16.5L13.2 17.8L11 15Z M4.5 13.2L7.8 12.8L8.6 16.5L6.5 17.8L4 15.8Z" fill="#3cc03c"/><path d="M11.2 1.8C6.5 5 6.5 17 11.2 20.6M11.2 1.8C16 5 16 17 11.2 20.6M11.2 1.8V20.6M2.2 8C7 10 15.5 10 20.2 8M1.8 13C7 15.4 15.5 15.4 20.6 13M4.2 4.8C8 6.6 14.5 6.6 18.2 4.8M4.2 17.8C8 16.4 14.5 16.4 18.2 17.8" fill="none" stroke="#0a1f14" stroke-width="0.8"/></svg>
<div class="dots" style="left:450px;top:177.6px"><i></i><i></i><i></i></div>
<svg style="left:431px;top:200px" width="23" height="23" viewBox="0 0 23 23"><path d="M1.2 1.8H16.8" stroke="#c8c8c8" stroke-width="1.6"/><g stroke="#f4f4f4" stroke-width="1.3" fill="none"><path d="M1.2 4.35H21.4M1.2 10.45H21.4M1.2 12.95H21.4M1.2 20.25H21.4" stroke-dasharray="1.3 1.386"/><path d="M1.85 3.7V11.1M20.65 3.7V11.1" stroke-dasharray="1.3 1.75"/><path d="M1.85 12.3V20.9M20.65 12.3V20.9" stroke-dasharray="1.3 1.133"/></g></svg>
<svg style="left:471px;top:200px" width="23" height="23" viewBox="0 0 23 23"><rect x="1.9" y="2.3" width="14.4" height="4.4" rx="2.2" fill="none" stroke="#f0f0f0" stroke-width="1.3"/><path d="M16.3 4.5H18.8V8.6L9.7 10V12.3" fill="none" stroke="#f0f0f0" stroke-width="1.3"/><rect x="7.6" y="12.3" width="4.4" height="8.4" rx="1.2" fill="none" stroke="#f0f0f0" stroke-width="1.3"/></svg>
<svg style="left:510px;top:199px" width="23" height="24" viewBox="0 0 23 24"><circle cx="9.7" cy="10.2" r="8.4" fill="none" stroke="#f0f0f0" stroke-width="1.3"/><path d="M15.7 16.2L21.2 21.8" stroke="#f0f0f0" stroke-width="1.5"/><path d="M2.4 11L5.8 8.6L9.3 10.6L16 5.6" fill="none" stroke="#f0f0f0" stroke-width="1.2"/><path d="M5.7 12.5V16.6M8.2 13V18M10.8 12.5V18M13.4 11V17" stroke="#f0f0f0" stroke-width="1.1"/></svg>
</div>
<div class="red" style="left:510px;top:84px;width:58px;height:50px"></div>
<div class="red" style="left:588px;top:166px;width:128px;height:36px"></div>
<div class="red" style="left:591px;top:260px;width:148px;height:78px"></div>
</body></html>
